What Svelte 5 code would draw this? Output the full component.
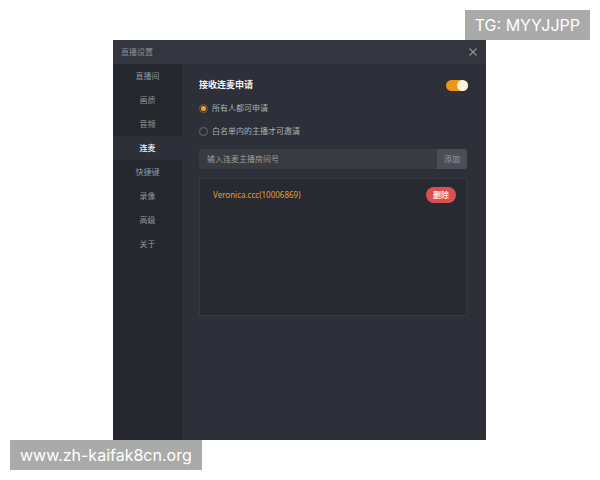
<script lang="ts">
  const tabs = ["直播间", "画质", "音频", "连麦", "快捷键", "录像", "高级", "关于"];

  let active = $state("连麦");
  let open = $state(true);
  let enabled = $state(true);
  let scope = $state("all");
  let room = $state("");
  let whitelist = $state(["Veronica.ccc(10006869)"]);

  function add(e: SubmitEvent) {
    e.preventDefault();
    const name = room.trim();
    if (!name) return;
    whitelist.push(name);
    room = "";
  }

  function remove(name: string) {
    whitelist = whitelist.filter((n) => n !== name);
  }
</script>

<div class="page">
  <span class="tag top">TG: MYYJJPP</span>

  {#if open}
    <div class="dialog" role="dialog" aria-labelledby="dialog-title">
      <header>
        <h1 id="dialog-title">直播设置</h1>
        <button class="close" type="button" aria-label="关闭" onclick={() => (open = false)}>
          <svg viewBox="0 0 8 8" width="8" height="8" aria-hidden="true">
            <path d="M.5 .5l7 7M7.5 .5l-7 7" />
          </svg>
        </button>
      </header>

      <div class="body">
        <nav>
          {#each tabs as tab}
            <button type="button" class:active={tab === active} onclick={() => (active = tab)}>{tab}</button>
          {/each}
        </nav>

        <main>
          <div class="row">
            <h2><label for="accept">接收连麦申请</label></h2>
            <input id="accept" class="switch" type="checkbox" role="switch" bind:checked={enabled} />
          </div>

          <div class="options">
            <label>
              <input type="radio" name="scope" value="all" bind:group={scope} />
              所有人都可申请
            </label>
            <label>
              <input type="radio" name="scope" value="whitelist" bind:group={scope} />
              白名单内的主播才可邀请
            </label>
          </div>

          <form onsubmit={add}>
            <input type="text" placeholder="输入连麦主播房间号" aria-label="输入连麦主播房间号" bind:value={room} />
            <button type="submit">添加</button>
          </form>

          <ul>
            {#each whitelist as name}
              <li>
                <span>{name}</span>
                <button type="button" onclick={() => remove(name)}>删除</button>
              </li>
            {/each}
          </ul>
        </main>
      </div>
    </div>
  {/if}

  <a class="tag bottom" href="http://www.zh-kaifak8cn.org">www.zh-kaifak8cn.org</a>
</div>

<style>
  :global(body) { margin: 0; background: #fff; }

  .page {
    position: relative; box-sizing: border-box;
    display: flex; flex-direction: column;
    min-height: 100vh; padding: 40px 114px 40px 113px;
    font-family: "Noto Sans CJK SC", sans-serif;
    font-size: 8px; line-height: 12px;
  }

  button, input { font: inherit; margin: 0; }
  button { border: 0; padding: 0; cursor: pointer; }
  h1, h2, ul { margin: 0; padding: 0; font-size: inherit; }

  .tag {
    position: absolute; padding: 0 10px; z-index: 1;
    background: #aaa; color: #fff; text-decoration: none;
    font-family: Inter, sans-serif; font-size: 16px; line-height: 30px;
  }
  .top { top: 10px; right: 10px; }
  .bottom { bottom: 10px; left: 10px; }

  .dialog {
    flex: 1; display: flex; flex-direction: column;
    background: #2d3038; color: #acaeb1;
  }

  header {
    display: flex; align-items: center; justify-content: space-between;
    height: 24px; padding: 0 8px;
    background: #33363e; color: #8b8d92;
  }
  h1 { font-weight: 400; }

  .close { display: flex; padding: 1px; background: none; }
  .close path { stroke: #929397; stroke-width: 1.1; fill: none; }

  .body { flex: 1; display: flex; }

  nav {
    display: flex; flex-direction: column;
    width: 69px; background: #25272f;
  }
  nav button { height: 24px; background: none; color: #94969b; }
  nav .active { background: #2d3038; color: #f0f0f1; font-weight: 500; }

  main { flex: 1; min-width: 0; padding: 13px 18px 0 17px; }

  .row { display: flex; align-items: center; justify-content: space-between; height: 16px; }
  h2 { color: #f4f4f5; font-size: 9px; font-weight: 700; }

  .switch {
    appearance: none; display: flex; justify-content: flex-start;
    width: 22px; height: 11px; border-radius: 6px; background: #555961; cursor: pointer;
  }
  .switch::before { content: ""; width: 11px; height: 11px; border-radius: 50%; background: #fff4e4; }
  .switch:checked { justify-content: flex-end; background: #ee960f; }

  .options { display: flex; flex-direction: column; gap: 11px; padding: 9px 0 12px; }
  .options label { display: flex; align-items: center; gap: 4px; }

  input[type="radio"] {
    appearance: none; box-sizing: border-box;
    display: flex; align-items: center; justify-content: center;
    width: 9px; height: 9px; border: 1px solid #686b71; border-radius: 50%;
  }
  input[type="radio"]:checked { border-color: #86602c; }
  input[type="radio"]:checked::before {
    content: ""; width: 5px; height: 5px; border-radius: 50%; background: #f3a62b;
  }

  form { display: flex; height: 20px; margin: 0 1px 9px 0; }
  form input {
    flex: 1; min-width: 0; padding: 0 8px; border: 0; border-radius: 2px 0 0 2px;
    background: #383b40; color: #c8c9cb; outline: none;
  }
  form input::placeholder { color: #9a9c9f; opacity: 1; }
  form button { width: 30px; border-radius: 0 2px 2px 0; background: #4b4e54; color: #9b9da1; }

  ul {
    box-sizing: border-box; min-height: 138px; margin-right: 1px; padding: 8px 10px 8px 13px;
    border: 1px solid #363940; background: #272a31; list-style: none;
  }
  li { display: flex; align-items: center; justify-content: space-between; }
  li span { color: #e89d2a; font-family: "Noto Sans", "Noto Sans CJK SC", sans-serif; }
  li button {
    width: 30px; height: 16px; border-radius: 8px;
    background: #dc4f50; color: #fff; font-weight: 500;
  }
</style>
